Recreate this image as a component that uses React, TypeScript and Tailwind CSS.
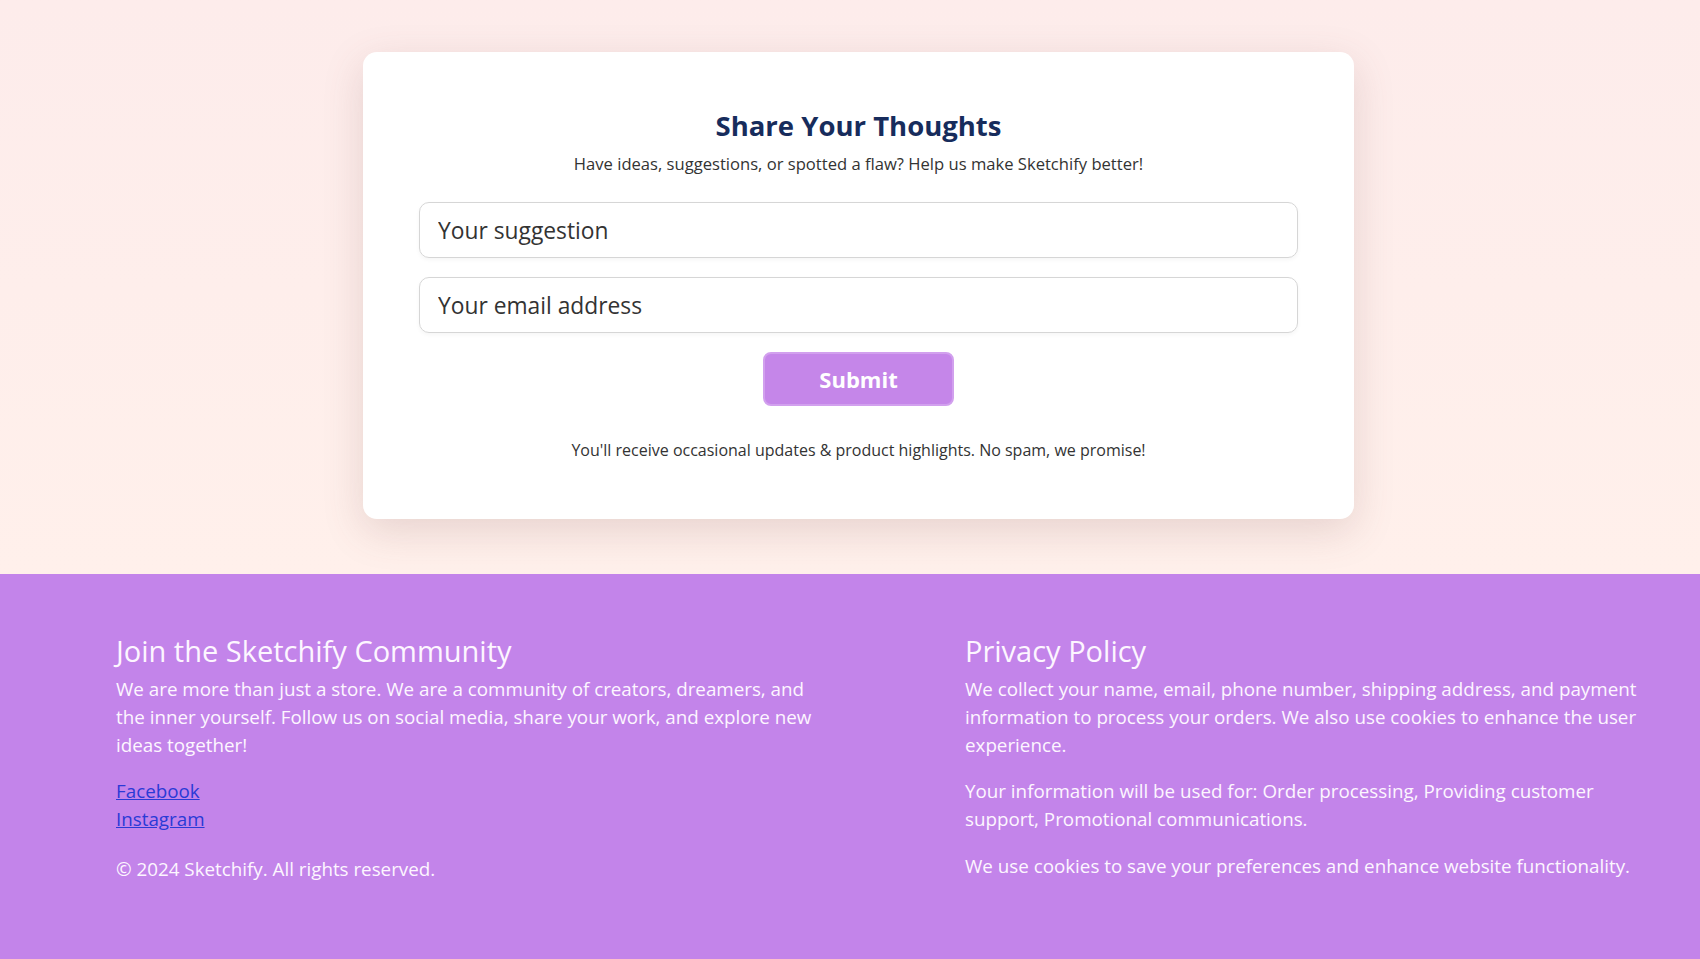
import React from "react";

const font = { fontFamily: '"Open Sans", "Noto Sans", sans-serif' };

export default function App() {
  return (
    <div className="min-h-screen flex flex-col bg-[#fdeceb]" style={font}>
      <section className="bg-gradient-to-b from-[#fdeceb] to-[#fff0eb] pt-[52px] pb-[55px] pl-[17px] flex justify-center">
        <div className="w-[991px] bg-white rounded-[14px] shadow-[0_12px_40px_rgba(120,80,80,0.18)] px-14 pt-14 pb-[57px] flex flex-col items-center">
          <h1 className="text-[27.5px] leading-[36px] font-bold text-[#172c5c] mb-2">Share Your Thoughts</h1>
          <p className="text-[16.6px] leading-6 text-[#333] mb-[26px]">
            Have ideas, suggestions, or spotted a flaw? Help us make Sketchify better!
          </p>
          <input
            className="w-full h-[56px] rounded-[10px] border border-[#d6d6d6] px-[18px] text-[22.8px] text-[#333] placeholder:text-[#333] shadow-[0_2px_4px_rgba(0,0,0,0.04)] mb-[19px] outline-none"
            placeholder="Your suggestion"
          />
          <input
            className="w-full h-[56px] rounded-[10px] border border-[#d6d6d6] px-[18px] text-[22.8px] text-[#333] placeholder:text-[#333] shadow-[0_2px_4px_rgba(0,0,0,0.04)] mb-[19px] outline-none"
            placeholder="Your email address"
          />
          <button className="w-[191px] h-[54px] rounded-[8px] bg-[#c586e9] border-2 border-[#d2a0ee] text-white text-[22px] font-bold">
            Submit
          </button>
          <p className="mt-[32px] text-[16px] leading-6 text-[#333]">
            You'll receive occasional updates &amp; product highlights. No spam, we promise!
          </p>
        </div>
      </section>
      <footer className="flex-1 bg-[#c384ea] text-[#fdf6ff] pt-[59px] pb-[70px] pl-[116px] flex">
        <div className="w-[700px]">
          <h2 className="text-[29px] leading-9 mb-[6px]">Join the Sketchify Community</h2>
          <p className="text-[18.8px] leading-7 mb-[18px]">
            We are more than just a store. We are a community of creators, dreamers, and the inner yourself. Follow us on social media, share your work, and explore new ideas together!
          </p>
          <div className="flex flex-col text-[18.8px] leading-7">
            <a href="#" className="underline text-[#2a3ad6] w-fit">Facebook</a>
            <a href="#" className="underline text-[#2a3ad6] w-fit">Instagram</a>
          </div>
          <p className="text-[18.8px] leading-7 mt-[22px]">© 2024 Sketchify. All rights reserved.</p>
        </div>
        <div className="w-[680px] ml-[149px]">
          <h2 className="text-[29px] leading-9 mb-[6px]">Privacy Policy</h2>
          <p className="text-[18.8px] leading-7 mb-[18px]">
            We collect your name, email, phone number, shipping address, and payment information to process your orders. We also use cookies to enhance the user experience.
          </p>
          <p className="text-[18.8px] leading-7 mb-[19px]">
            Your information will be used for: Order processing, Providing customer support, Promotional communications.
          </p>
          <p className="text-[18.8px] leading-7">
            We use cookies to save your preferences and enhance website functionality.
          </p>
        </div>
      </footer>
    </div>
  );
}
